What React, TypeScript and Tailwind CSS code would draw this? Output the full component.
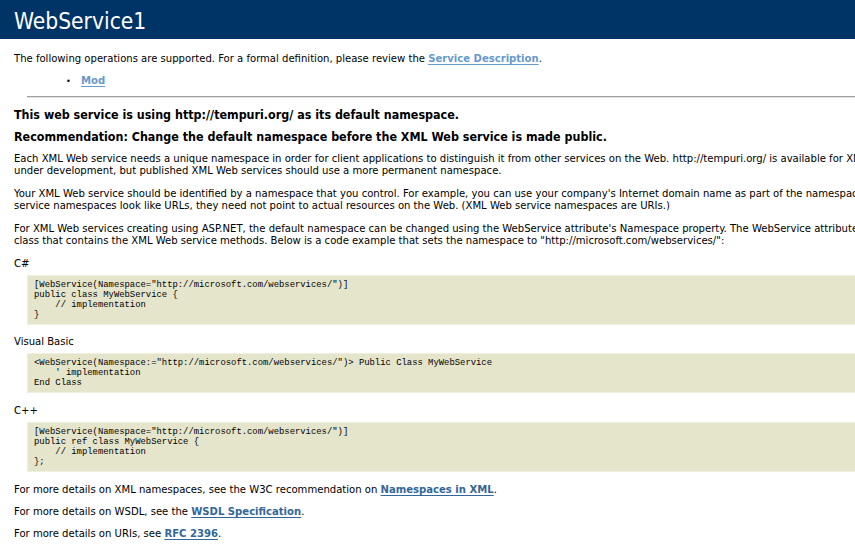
import React from "react";

const Pre = ({ lines }: { lines: string[] }) => (
  <div className="ml-[27px] w-[900px] bg-[#e5e5cc] border border-[#f0f0e0] px-[6px] py-[4px] font-['Liberation_Mono',monospace] text-[8.9px] leading-[10px] text-black whitespace-pre">
    {lines.map((l, i) => (
      <div key={i}>{l}</div>
    ))}
  </div>
);

export default function App() {
  return (
    <div className="w-[855px] h-[553px] overflow-hidden bg-white text-black font-['DejaVu_Sans_Condensed','DejaVu_Sans',sans-serif]">
      <div className="h-[39px] bg-[#003366] pl-[14px] pt-[6px]">
        <div className="font-['DejaVu_Sans_Condensed','DejaVu_Sans',sans-serif] text-[22.6px] leading-[30px] text-white">
          WebService1
        </div>
      </div>
      <div className="text-[11.2px] leading-[12px] whitespace-nowrap">
        <div className="mt-[14px] pl-[14px]">
          The following operations are supported. For a formal definition, please review the{" "}
          <span className="font-bold underline underline-offset-2 text-[#6699cc]">Service Description</span>.
        </div>
        <div className="mt-[10px] pl-[66px] flex items-center">
          <span className="w-[15px] text-[9px]">•</span>
          <span className="font-bold underline underline-offset-2 text-[#6699cc]">Mod</span>
        </div>
        <div className="mt-[9px] ml-[27px] w-[900px] h-[2px] border-t border-[#a0a0a0] border-b border-b-[#e0e0e0]" />
        <div className="pl-[14px] font-bold text-[12.4px] leading-[15px] mt-[9px]">
          This web service is using http://tempuri.org/ as its default namespace.
        </div>
        <div className="pl-[14px] font-bold text-[12.4px] leading-[15px] mt-[7px]">
          Recommendation: Change the default namespace before the XML Web service is made public.
        </div>
        <div className="pl-[14px] mt-[9px]">
          <div>
            Each XML Web service needs a unique namespace in order for client applications to distinguish it from other services on the Web. http://tempuri.org/ is available for XML Web services that are
          </div>
          <div>under development, but published XML Web services should use a more permanent namespace.</div>
        </div>
        <div className="pl-[14px] mt-[11px]">
          <div>
            Your XML Web service should be identified by a namespace that you control. For example, you can use your company's Internet domain name as part of the namespace. Although many XML Web
          </div>
          <div>service namespaces look like URLs, they need not point to actual resources on the Web. (XML Web service namespaces are URIs.)</div>
        </div>
        <div className="pl-[14px] mt-[11px]">
          <div>
            For XML Web services creating using ASP.NET, the default namespace can be changed using the WebService attribute's Namespace property. The WebService attribute is an attribute applied to the
          </div>
          <div>class that contains the XML Web service methods. Below is a code example that sets the namespace to "http://microsoft.com/webservices/":</div>
        </div>
        <div className="pl-[14px] mt-[11px]">C#</div>
        <div className="mt-[5px]">
          <Pre
            lines={[
              '[WebService(Namespace="http://microsoft.com/webservices/")]',
              "public class MyWebService {",
              "    // implementation",
              "}",
            ]}
          />
        </div>
        <div className="pl-[14px] mt-[11px]">Visual Basic</div>
        <div className="mt-[5px]">
          <Pre
            lines={[
              '<WebService(Namespace:="http://microsoft.com/webservices/")> Public Class MyWebService',
              "    ' implementation",
              "End Class",
            ]}
          />
        </div>
        <div className="pl-[14px] mt-[12px]">C++</div>
        <div className="mt-[5px]">
          <Pre
            lines={[
              '[WebService(Namespace="http://microsoft.com/webservices/")]',
              "public ref class MyWebService {",
              "    // implementation",
              "};",
            ]}
          />
        </div>
        <div className="pl-[14px] mt-[12px]">
          For more details on XML namespaces, see the W3C recommendation on{" "}
          <span className="font-bold underline underline-offset-2 text-[#336699]">Namespaces in XML</span>.
        </div>
        <div className="pl-[14px] mt-[10px]">
          For more details on WSDL, see the{" "}
          <span className="font-bold underline underline-offset-2 text-[#336699]">WSDL Specification</span>.
        </div>
        <div className="pl-[14px] mt-[10px]">
          For more details on URIs, see <span className="font-bold underline underline-offset-2 text-[#336699]">RFC 2396</span>.
        </div>
      </div>
    </div>
  );
}
